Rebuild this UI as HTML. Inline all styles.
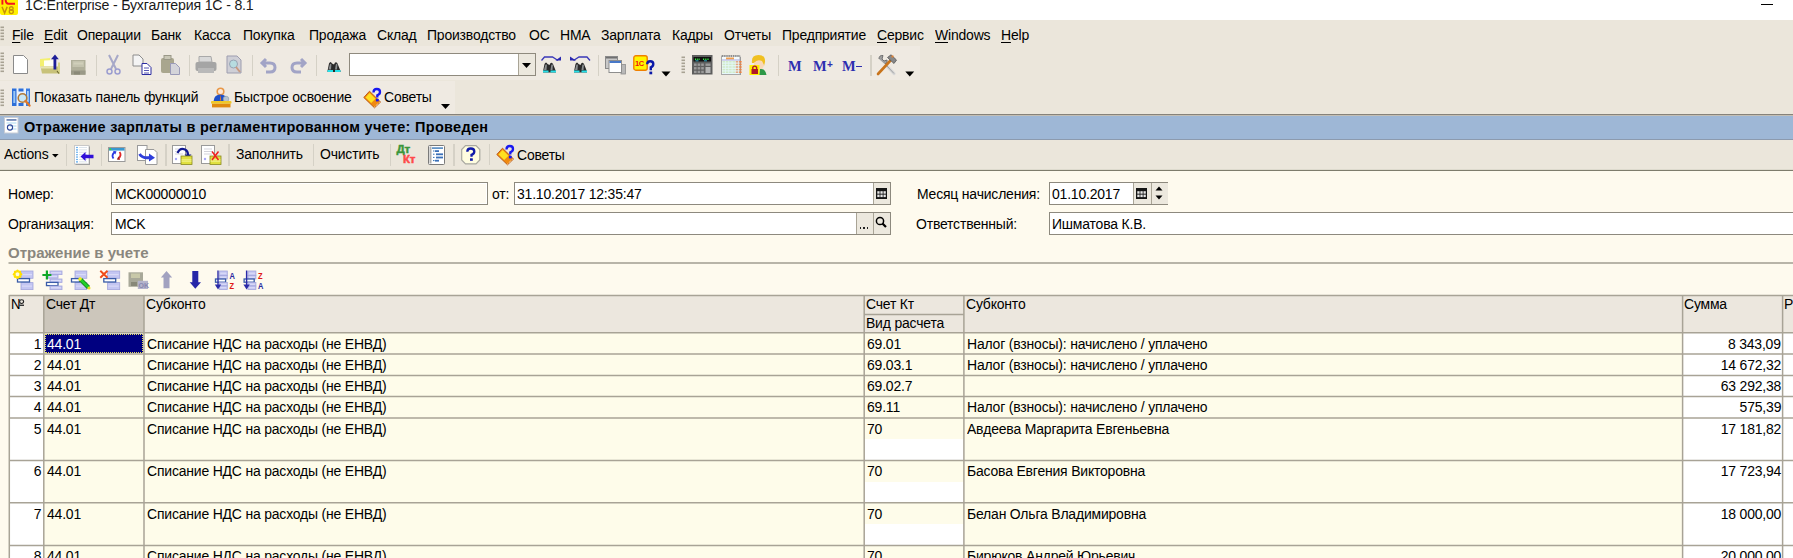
<!DOCTYPE html>
<html><head><meta charset="utf-8"><title>1C</title>
<style>
html,body{margin:0;padding:0;}
body{width:1793px;height:558px;position:relative;overflow:hidden;background:#FEFAEE;font-family:"Liberation Sans", sans-serif;}
.t{position:absolute;white-space:nowrap;line-height:1;font-family:"Liberation Sans", sans-serif;}
u{text-decoration:underline;text-underline-offset:2px;}
svg{overflow:visible}
</style></head><body>
<div style="position:absolute;left:0px;top:0px;width:1793px;height:20px;background:#fff"></div><div style="position:absolute;left:0px;top:0px;width:18px;height:15px;background:#FFF000;border-radius:0 0 2px 2px"></div><svg style="position:absolute;left:0px;top:0px" width="18" height="15" viewBox="0 0 18 15"><path d="M2.4 0 V4.6" stroke="#F5141E" stroke-width="1.9"/><path d="M5.6 0 Q5.8 3.8 8.5 3.8 H15" stroke="#F5141E" stroke-width="1.9" fill="none"/><path d="M2 6.8 L4.6 13 L7.2 6.8" stroke="#C8900A" stroke-width="1.5" fill="none"/><circle cx="11.3" cy="8.5" r="1.8" fill="none" stroke="#C8900A" stroke-width="1.4"/><circle cx="11.3" cy="11.6" r="2" fill="none" stroke="#C8900A" stroke-width="1.4"/></svg><div class="t" style="left:24.6px;top:-2.52px;font-size:15.5px;font-weight:normal;color:#1a1a1a;letter-spacing:-0.2px;transform:scaleX(0.913);transform-origin:left top;">1C:Enterprise - Бухгалтерия 1С - 8.1</div><div style="position:absolute;left:1761px;top:3.6px;width:12px;height:1.8px;background:#000"></div><div style="position:absolute;left:0px;top:20px;width:1793px;height:95px;background:#EBE6DB"></div><div style="position:absolute;left:0px;top:46px;width:920px;height:34px;background:#EFEAE2"></div><div style="position:absolute;left:0px;top:81px;width:455px;height:33px;background:#EFEAE2"></div><svg style="position:absolute;left:0px;top:26px" width="3" height="16" viewBox="0 0 3 16"><rect x="0.5" y="0.5" width="3.5" height="1.6" fill="#A8A293"/><rect x="0.5" y="3.5" width="3.5" height="1.6" fill="#A8A293"/><rect x="0.5" y="6.5" width="3.5" height="1.6" fill="#A8A293"/><rect x="0.5" y="9.5" width="3.5" height="1.6" fill="#A8A293"/><rect x="0.5" y="12.5" width="3.5" height="1.6" fill="#A8A293"/></svg><svg style="position:absolute;left:0px;top:52px" width="3" height="21" viewBox="0 0 3 21"><rect x="0.5" y="0.5" width="3.5" height="1.6" fill="#A8A293"/><rect x="0.5" y="3.5" width="3.5" height="1.6" fill="#A8A293"/><rect x="0.5" y="6.5" width="3.5" height="1.6" fill="#A8A293"/><rect x="0.5" y="9.5" width="3.5" height="1.6" fill="#A8A293"/><rect x="0.5" y="12.5" width="3.5" height="1.6" fill="#A8A293"/><rect x="0.5" y="15.5" width="3.5" height="1.6" fill="#A8A293"/><rect x="0.5" y="18.5" width="3.5" height="1.6" fill="#A8A293"/></svg><svg style="position:absolute;left:0px;top:89px" width="3" height="19" viewBox="0 0 3 19"><rect x="0.5" y="0.5" width="3.5" height="1.6" fill="#A8A293"/><rect x="0.5" y="3.5" width="3.5" height="1.6" fill="#A8A293"/><rect x="0.5" y="6.5" width="3.5" height="1.6" fill="#A8A293"/><rect x="0.5" y="9.5" width="3.5" height="1.6" fill="#A8A293"/><rect x="0.5" y="12.5" width="3.5" height="1.6" fill="#A8A293"/><rect x="0.5" y="15.5" width="3.5" height="1.6" fill="#A8A293"/></svg><svg style="position:absolute;left:681px;top:56px" width="3" height="17" viewBox="0 0 3 17"><rect x="0.5" y="0.5" width="3.5" height="1.6" fill="#A8A293"/><rect x="0.5" y="3.5" width="3.5" height="1.6" fill="#A8A293"/><rect x="0.5" y="6.5" width="3.5" height="1.6" fill="#A8A293"/><rect x="0.5" y="9.5" width="3.5" height="1.6" fill="#A8A293"/><rect x="0.5" y="12.5" width="3.5" height="1.6" fill="#A8A293"/><rect x="0.5" y="15.5" width="3.5" height="1.6" fill="#A8A293"/></svg><div class="t" style="left:12px;top:26.88px;font-size:15.5px;font-weight:normal;color:#000;letter-spacing:-0.2px;transform:scaleX(0.9);transform-origin:left top;"><u>F</u>ile</div><div class="t" style="left:43.8px;top:26.88px;font-size:15.5px;font-weight:normal;color:#000;letter-spacing:-0.2px;transform:scaleX(0.9);transform-origin:left top;"><u>E</u>dit</div><div class="t" style="left:76.6px;top:26.88px;font-size:15.5px;font-weight:normal;color:#000;letter-spacing:-0.2px;transform:scaleX(0.9);transform-origin:left top;">Операции</div><div class="t" style="left:151.4px;top:26.88px;font-size:15.5px;font-weight:normal;color:#000;letter-spacing:-0.2px;transform:scaleX(0.9);transform-origin:left top;">Банк</div><div class="t" style="left:194px;top:26.88px;font-size:15.5px;font-weight:normal;color:#000;letter-spacing:-0.2px;transform:scaleX(0.9);transform-origin:left top;">Касса</div><div class="t" style="left:243.4px;top:26.88px;font-size:15.5px;font-weight:normal;color:#000;letter-spacing:-0.2px;transform:scaleX(0.9);transform-origin:left top;">Покупка</div><div class="t" style="left:308.7px;top:26.88px;font-size:15.5px;font-weight:normal;color:#000;letter-spacing:-0.2px;transform:scaleX(0.9);transform-origin:left top;">Продажа</div><div class="t" style="left:376.7px;top:26.88px;font-size:15.5px;font-weight:normal;color:#000;letter-spacing:-0.2px;transform:scaleX(0.9);transform-origin:left top;">Склад</div><div class="t" style="left:427.2px;top:26.88px;font-size:15.5px;font-weight:normal;color:#000;letter-spacing:-0.2px;transform:scaleX(0.9);transform-origin:left top;">Производство</div><div class="t" style="left:529.3px;top:26.88px;font-size:15.5px;font-weight:normal;color:#000;letter-spacing:-0.2px;transform:scaleX(0.9);transform-origin:left top;">ОС</div><div class="t" style="left:560.2px;top:26.88px;font-size:15.5px;font-weight:normal;color:#000;letter-spacing:-0.2px;transform:scaleX(0.9);transform-origin:left top;">НМА</div><div class="t" style="left:600.9px;top:26.88px;font-size:15.5px;font-weight:normal;color:#000;letter-spacing:-0.2px;transform:scaleX(0.9);transform-origin:left top;">Зарплата</div><div class="t" style="left:672.4px;top:26.88px;font-size:15.5px;font-weight:normal;color:#000;letter-spacing:-0.2px;transform:scaleX(0.9);transform-origin:left top;">Кадры</div><div class="t" style="left:724.2px;top:26.88px;font-size:15.5px;font-weight:normal;color:#000;letter-spacing:-0.2px;transform:scaleX(0.9);transform-origin:left top;">Отчеты</div><div class="t" style="left:782.4px;top:26.88px;font-size:15.5px;font-weight:normal;color:#000;letter-spacing:-0.2px;transform:scaleX(0.9);transform-origin:left top;">Предприятие</div><div class="t" style="left:876.8px;top:26.88px;font-size:15.5px;font-weight:normal;color:#000;letter-spacing:-0.2px;transform:scaleX(0.9);transform-origin:left top;"><u>С</u>ервис</div><div class="t" style="left:935.3px;top:26.88px;font-size:15.5px;font-weight:normal;color:#000;letter-spacing:-0.2px;transform:scaleX(0.9);transform-origin:left top;"><u>W</u>indows</div><div class="t" style="left:1001.1px;top:26.88px;font-size:15.5px;font-weight:normal;color:#000;letter-spacing:-0.2px;transform:scaleX(0.9);transform-origin:left top;"><u>H</u>elp</div><svg style="position:absolute;left:13px;top:55px" width="16" height="20" viewBox="0 0 16 20"><path d="M0.5 0.5 H10.5 L14.5 4.5 V18.5 H0.5 Z" fill="#fff" stroke="#8A8A8A"/></svg><svg style="position:absolute;left:39px;top:53px" width="23" height="23" viewBox="0 0 23 23"><path d="M1 13.5 L1 6 L11 5 L11 13.5Z" fill="#F4F070"/><path d="M5 13.5 V7.5 L16 7 V13.5Z" fill="#FFFFF4"/><path d="M1.5 13.5 H20.5 V20.5 H3 Z" fill="#C8C27A"/><path d="M1.5 13.5 H17 V15.5 H2Z" fill="#E8E4B0"/><path d="M19 9.5 H21 V20.5 H19Z" fill="#D8D48A"/><path d="M20 20.5 L18 18" stroke="#6A6430" stroke-width="1.2"/><path d="M16 1.5 L12 6.3 H14.5 V16.5 H17.3 V6.3 H19.8Z" fill="#1E1E98"/></svg><svg style="position:absolute;left:71px;top:60px" width="15" height="15" viewBox="0 0 15 15"><rect x="0" y="0" width="14.5" height="14.7" fill="#B0AF9A"/><rect x="1.5" y="1" width="11.5" height="6" fill="#C4C3AE"/><rect x="2.5" y="2.5" width="9.5" height="2" fill="#D0CFBA"/><rect x="0" y="10.5" width="14.5" height="4.2" fill="#9A9988"/><rect x="3" y="11.5" width="6" height="3" fill="#8A8978"/></svg><div style="position:absolute;left:95.5px;top:55px;width:1.5px;height:21px;background:#D5D1C6"></div><svg style="position:absolute;left:106px;top:55px" width="15" height="20" viewBox="0 0 15 20"><path d="M3 0 L10 14 M12 0 L5 14" stroke="#A6A8C8" stroke-width="2"/><circle cx="3.5" cy="16.5" r="2.5" fill="none" stroke="#9B9DD0" stroke-width="1.5"/><circle cx="11.5" cy="16.5" r="2.5" fill="none" stroke="#9B9DD0" stroke-width="1.5"/></svg><svg style="position:absolute;left:132px;top:54px" width="21" height="22" viewBox="0 0 21 22"><path d="M1.0 1.0 H7.0 L11.0 5.0 V12.0 H1.0 Z" fill="#F4F4F4" stroke="#8C8C8C"/><path d="M10.0 9.5 H15.0 L19.0 13.5 V20.5 H10.0 Z" fill="#fff" stroke="#2B2BA0"/><path d="M12 14h5M12 16.5h5M12 19h5" stroke="#2B2BA0" stroke-width=".8"/></svg><svg style="position:absolute;left:160px;top:55px" width="22" height="21" viewBox="0 0 22 21"><rect x="1" y="3" width="13" height="15" rx="2" fill="#A9A68E"/><rect x="4" y="0.5" width="7" height="4" fill="#C9C7B6" stroke="#9A9888"/><path d="M10.5 8.5 H15.5 L19.5 12.5 V19.5 H10.5 Z" fill="#D4D4DA" stroke="#9A9AB8"/></svg><div style="position:absolute;left:188.5px;top:55px;width:1.5px;height:21px;background:#D5D1C6"></div><svg style="position:absolute;left:195px;top:56px" width="22" height="18" viewBox="0 0 22 18"><path d="M4 0.5 H16 L17 6 H4 Z" fill="#D9D9D9" stroke="#A9A9A9"/><rect x="0.5" y="6" width="21" height="9" rx="2" fill="#A5A5A5"/><rect x="3" y="12" width="16" height="5" fill="#B9B9B9"/></svg><svg style="position:absolute;left:226px;top:55px" width="17" height="20" viewBox="0 0 17 20"><path d="M1.0 1.0 H11.0 L15.0 5.0 V18.0 H1.0 Z" fill="#CFCFD6" stroke="#9D9DAF"/><circle cx="7.5" cy="9" r="4" fill="#B7DCE0" stroke="#98A4B4"/><path d="M10 12 L14 17" stroke="#C89A80" stroke-width="2"/></svg><div style="position:absolute;left:251.5px;top:55px;width:1.5px;height:21px;background:#D5D1C6"></div><svg style="position:absolute;left:261px;top:56px" width="16" height="18" viewBox="0 0 16 18"><path d="M5 3 L1 7 L5 11 M1.5 7 H9 Q14 7 14 11.5 Q14 16 9 16 H5" fill="none" stroke="#A2A4C6" stroke-width="3"/></svg><svg style="position:absolute;left:290px;top:56px" width="16" height="18" viewBox="0 0 16 18"><path d="M11 3 L15 7 L11 11 M14.5 7 H7 Q2 7 2 11.5 Q2 16 7 16 H11" fill="none" stroke="#A2A4C6" stroke-width="3"/></svg><div style="position:absolute;left:315.5px;top:55px;width:1.5px;height:21px;background:#D5D1C6"></div><svg style="position:absolute;left:326px;top:60px" width="16" height="15" viewBox="0 0 16 15"><g transform="translate(1,0.5)"><path d="M0.5 10.5 L2 3 Q3.5 0 5 3 L7 4 Q8.5 0 10.5 3 L13.5 10.5 V11.5 H0.5Z" fill="#2A2A2A"/><path d="M1.5 9 L2.8 4 Q3.6 2.5 4.4 4 L4 9Z M8 9 L8.8 4 Q9.6 2.5 10.4 4 L10 9Z" fill="#8A8E90"/><rect x="0.5" y="9.5" width="5.5" height="2" fill="#28E0E8"/><rect x="8" y="9.5" width="5.5" height="2" fill="#28E0E8"/></g></svg><div style="position:absolute;left:349px;top:53px;width:187px;height:23px;background:#fff;border:1px solid #8F8A7E;box-sizing:border-box"></div><div style="position:absolute;left:517.5px;top:54px;width:17.5px;height:21px;background:#ECE8DE;border-left:1px solid #A9A496;box-sizing:border-box"></div><svg style="position:absolute;left:521px;top:62px" width="12" height="7" viewBox="0 0 12 7"><path d="M1 1 H10 L5.5 6Z" fill="#000"/></svg><svg style="position:absolute;left:540px;top:54px" width="24" height="22" viewBox="0 0 24 22"><path d="M1.5 6.5 L4.5 3 H12.5 L18 6.5" fill="none" stroke="#3A38B8" stroke-width="1.3"/><path d="M15.5 6.5 H21 V2.5Z" fill="#2A28B0"/><g transform="translate(2.5,7)"><path d="M0.5 10.5 L2 3 Q3.5 0 5 3 L7 4 Q8.5 0 10.5 3 L13.5 10.5 V11.5 H0.5Z" fill="#2A2A2A"/><path d="M1.5 9 L2.8 4 Q3.6 2.5 4.4 4 L4 9Z M8 9 L8.8 4 Q9.6 2.5 10.4 4 L10 9Z" fill="#8A8E90"/><rect x="0.5" y="9.5" width="5.5" height="2" fill="#28E0E8"/><rect x="8" y="9.5" width="5.5" height="2" fill="#28E0E8"/></g></svg><svg style="position:absolute;left:569px;top:54px" width="24" height="22" viewBox="0 0 24 22"><path d="M21 6.5 L18 3 H10 L4.5 6.5" fill="none" stroke="#3A38B8" stroke-width="1.3"/><path d="M7 6.5 H1 V2.5Z" fill="#2A28B0"/><g transform="translate(4.5,7)"><path d="M0.5 10.5 L2 3 Q3.5 0 5 3 L7 4 Q8.5 0 10.5 3 L13.5 10.5 V11.5 H0.5Z" fill="#2A2A2A"/><path d="M1.5 9 L2.8 4 Q3.6 2.5 4.4 4 L4 9Z M8 9 L8.8 4 Q9.6 2.5 10.4 4 L10 9Z" fill="#8A8E90"/><rect x="0.5" y="9.5" width="5.5" height="2" fill="#28E0E8"/><rect x="8" y="9.5" width="5.5" height="2" fill="#28E0E8"/></g></svg><div style="position:absolute;left:597.5px;top:55px;width:1.5px;height:21px;background:#D5D1C6"></div><svg style="position:absolute;left:604.5px;top:55.5px" width="21" height="19" viewBox="0 0 21 19"><rect x="0.5" y="0.5" width="12" height="12" fill="#C8C8C8" stroke="#8A8A8A"/><rect x="1" y="1" width="11" height="1.5" fill="#707070"/><rect x="16" y="8.5" width="4.5" height="9.5" fill="#B8B8B8" stroke="#8E8E8E" stroke-width=".8"/><rect x="4" y="4.5" width="12.5" height="12" fill="#fff" stroke="#8E8E8E"/><rect x="4.5" y="5" width="11.5" height="2" fill="#4878C8"/></svg><svg style="position:absolute;left:633px;top:54.5px" width="23" height="21" viewBox="0 0 23 21"><rect x="0.8" y="0.8" width="13.4" height="14.4" rx="2" fill="#FFF600" stroke="#F08000" stroke-width="1.4"/><text x="2" y="11" font-family="Liberation Sans" font-weight="bold" font-size="7.5" fill="#F01010" letter-spacing="-.5">1C</text><path d="M14.2 9.3 Q14.2 6.2 17.2 6.2 Q20.3 6.2 20.3 9 Q20.3 11.3 17.8 12.3 V15.2" fill="none" stroke="#0A18A8" stroke-width="2.4"/><rect x="16.4" y="16.6" width="2.8" height="2.7" fill="#0A18A8"/></svg><svg style="position:absolute;left:660.5px;top:71px" width="10" height="6" viewBox="0 0 10 6"><path d="M0.5 0.5 H9.5 L5 5.5Z" fill="#000"/></svg><svg style="position:absolute;left:692px;top:55px" width="20.5" height="19.5" viewBox="0 0 20.5 19.5"><rect x="0" y="0" width="20.5" height="19.5" fill="#5E5E5E"/><rect x="1.5" y="2" width="17.5" height="4.5" fill="#111"/><path d="M3 4.3h5M11 4.3h6" stroke="#30F040" stroke-width="1.6" stroke-dasharray="1 .8"/><path d="M3.5 5.8h3M12 5.8h3" stroke="#30C8E8" stroke-width=".8"/><rect x="2.0" y="8.5" width="2.6" height="2.4" fill="#9A9A9A"/><rect x="5.6" y="8.5" width="2.6" height="2.4" fill="#9A9A9A"/><rect x="9.2" y="8.5" width="2.6" height="2.4" fill="#9A9A9A"/><rect x="2.0" y="12.1" width="2.6" height="2.4" fill="#9A9A9A"/><rect x="5.6" y="12.1" width="2.6" height="2.4" fill="#9A9A9A"/><rect x="9.2" y="12.1" width="2.6" height="2.4" fill="#9A9A9A"/><rect x="2.0" y="15.7" width="2.6" height="2.4" fill="#9A9A9A"/><rect x="5.6" y="15.7" width="2.6" height="2.4" fill="#9A9A9A"/><rect x="9.2" y="15.7" width="2.6" height="2.4" fill="#9A9A9A"/><rect x="13.5" y="8.5" width="5" height="2.4" fill="#9A9A9A"/><rect x="13.5" y="12" width="5" height="6" fill="#B4B4B4"/></svg><svg style="position:absolute;left:721px;top:55px" width="20" height="20" viewBox="0 0 20 20"><rect x="0.5" y="1" width="18.5" height="18.5" fill="#F4FBFC" stroke="#A8A8A8"/><rect x="19" y="2" width="1" height="18" fill="#9A9A9A"/><path d="M1 1h18" stroke="#505050" stroke-width="1.2" stroke-dasharray="1.2 1"/><rect x="5" y="2.5" width="8" height="2" fill="#F0A050"/><rect x="1" y="4.5" width="18" height="1" fill="#A8A8E0"/><rect x="1.5" y="6.0" width="2.6" height="1.6" fill="#D8E8B0"/><rect x="4.8" y="6.0" width="2.6" height="1.6" fill="#D8E8B0"/><rect x="8.1" y="6.0" width="2.6" height="1.6" fill="#D8E8B0"/><rect x="11.399999999999999" y="6.0" width="2.6" height="1.6" fill="#D8E8B0"/><rect x="14.7" y="6.0" width="2.6" height="1.6" fill="#F08040"/><rect x="18.0" y="6.0" width="2.6" height="1.6" fill="#F08040"/><rect x="1.5" y="8.6" width="2.6" height="1.6" fill="#D8E8B0"/><rect x="4.8" y="8.6" width="2.6" height="1.6" fill="#D8E8B0"/><rect x="8.1" y="8.6" width="2.6" height="1.6" fill="#D8E8B0"/><rect x="11.399999999999999" y="8.6" width="2.6" height="1.6" fill="#D8E8B0"/><rect x="14.7" y="8.6" width="2.6" height="1.6" fill="#F08040"/><rect x="18.0" y="8.6" width="2.6" height="1.6" fill="#F08040"/><rect x="1.5" y="11.2" width="2.6" height="1.6" fill="#D8E8B0"/><rect x="4.8" y="11.2" width="2.6" height="1.6" fill="#D8E8B0"/><rect x="8.1" y="11.2" width="2.6" height="1.6" fill="#D8E8B0"/><rect x="11.399999999999999" y="11.2" width="2.6" height="1.6" fill="#D8E8B0"/><rect x="14.7" y="11.2" width="2.6" height="1.6" fill="#F08040"/><rect x="18.0" y="11.2" width="2.6" height="1.6" fill="#F08040"/><rect x="1.5" y="13.8" width="2.6" height="1.6" fill="#D8E8B0"/><rect x="4.8" y="13.8" width="2.6" height="1.6" fill="#D8E8B0"/><rect x="8.1" y="13.8" width="2.6" height="1.6" fill="#D8E8B0"/><rect x="11.399999999999999" y="13.8" width="2.6" height="1.6" fill="#D8E8B0"/><rect x="14.7" y="13.8" width="2.6" height="1.6" fill="#F08040"/><rect x="18.0" y="13.8" width="2.6" height="1.6" fill="#F08040"/><rect x="1.5" y="16.4" width="2.6" height="1.6" fill="#D8E8B0"/><rect x="4.8" y="16.4" width="2.6" height="1.6" fill="#D8E8B0"/><rect x="8.1" y="16.4" width="2.6" height="1.6" fill="#D8E8B0"/><rect x="11.399999999999999" y="16.4" width="2.6" height="1.6" fill="#D8E8B0"/><rect x="14.7" y="16.4" width="2.6" height="1.6" fill="#F08040"/><rect x="18.0" y="16.4" width="2.6" height="1.6" fill="#F08040"/><rect x="1.5" y="6" width="17" height="13" fill="#C8F0F8" opacity=".35"/></svg><svg style="position:absolute;left:749px;top:54px" width="19" height="22" viewBox="0 0 19 22"><path d="M3 9 Q2 1 9.5 1 Q16.5 1 16 8 L15 12 Q11 5 5 9Z" fill="#F0C020"/><path d="M5 9 Q8 5 13 7 L15 11 Q14 16 10 16 Q6 16 5 12Z" fill="#F8D8B8"/><path d="M11 15 Q16 14 17.5 21 H10Z" fill="#2E9848"/><rect x="0.5" y="11" width="10" height="10" fill="#FFF000"/><rect x="2.5" y="15" width="6.5" height="5" fill="#B01828"/><path d="M3.8 15 V13.3 Q5.7 11 7.6 13.3 V15" fill="none" stroke="#B01828" stroke-width="1.4"/></svg><div style="position:absolute;left:777.5px;top:55px;width:1.5px;height:21px;background:#D5D1C6"></div><div class="t" style="left:788px;top:58.73px;font-size:14.5px;font-weight:bold;color:#2E2EB0;letter-spacing:-0.2px;font-family:Liberation Serif,serif;">M</div><div class="t" style="left:813px;top:58.73px;font-size:14.5px;font-weight:bold;color:#2E2EB0;letter-spacing:-0.2px;font-family:Liberation Serif,serif;">M</div><div class="t" style="left:827px;top:60.03px;font-size:10px;font-weight:bold;color:#2E2EB0;letter-spacing:-0.2px;font-family:Liberation Sans,sans-serif;">+</div><div class="t" style="left:842px;top:58.73px;font-size:14.5px;font-weight:bold;color:#2E2EB0;letter-spacing:-0.2px;font-family:Liberation Serif,serif;">M</div><div style="position:absolute;left:855.5px;top:65.5px;width:6.5px;height:1.6px;background:#2E2EB0"></div><div style="position:absolute;left:870.0px;top:55px;width:1.5px;height:21px;background:#D5D1C6"></div><svg style="position:absolute;left:876px;top:54px" width="22" height="22" viewBox="0 0 22 22"><path d="M3 5 Q3 1 7 1.5 L6 5 L8 7 L11 6 Q12 9 9 10 L12 13" fill="#A0A0A0" stroke="#707070" stroke-width="1"/><path d="M10.5 11.5 L18 19.5" stroke="#D8D8D8" stroke-width="3.2" stroke-linecap="round"/><path d="M10.5 11.5 L18 19.5" stroke="#909090" stroke-width=".8"/><path d="M2 20 L14.5 6.5" stroke="#C8741C" stroke-width="2.6" stroke-linecap="round"/><path d="M11.5 3.5 L15 0.8 L20.5 6 L18 9.5 Z" fill="#888" stroke="#555" stroke-width=".8"/><rect x="15.5" y="1.5" width="2" height="2" fill="#E08030"/></svg><svg style="position:absolute;left:905px;top:71px" width="9.5" height="6" viewBox="0 0 9.5 6"><path d="M0.3 0.5 H9.2 L4.75 5.5Z" fill="#000"/></svg><svg style="position:absolute;left:12px;top:88px" width="20" height="20" viewBox="0 0 20 20"><rect x="0" y="0.5" width="18" height="17.5" fill="#EAF2FC"/><rect x="0" y="0.5" width="4.5" height="17.5" fill="#2D6FD8"/><rect x="1.3" y="3" width="2" height="12" fill="#9CC8F4"/><rect x="6.5" y="0.5" width="5" height="3" fill="#2D6FD8"/><rect x="6.5" y="15" width="5" height="3" fill="#2D6FD8"/><rect x="14" y="0.5" width="4" height="17.5" fill="#3A7CE0"/><rect x="15" y="3" width="1.8" height="11" fill="#A8D0F8"/><circle cx="10.5" cy="10" r="4.3" fill="#C8E8F8" stroke="#B07A38" stroke-width="1.6"/><path d="M13.5 13 L17.5 17.5" stroke="#E07828" stroke-width="2.4" stroke-linecap="round"/></svg><div class="t" style="left:34px;top:88.88px;font-size:15.5px;font-weight:normal;color:#000;letter-spacing:-0.2px;transform:scaleX(0.9);transform-origin:left top;">Показать панель функций</div><svg style="position:absolute;left:211px;top:86px" width="21" height="22" viewBox="0 0 21 22"><circle cx="9.5" cy="5.5" r="3.3" fill="#FCE8D8" stroke="#E89848" stroke-width="1.6"/><path d="M2.5 15.5 Q3 8.5 9.5 8.5 Q16 8.5 16.5 15.5Z" fill="#1E4FC8"/><path d="M9.5 8.5 L8.8 14.5 L10.2 14.5Z" fill="#F07818"/><circle cx="15" cy="13" r="2.8" fill="#B8C4D0" stroke="#8898A8" stroke-width=".6"/><rect x="0" y="15" width="20.5" height="2.8" rx="1" fill="#F0C828"/><rect x="1" y="17.8" width="18.5" height="3.6" fill="#E08A10"/></svg><div class="t" style="left:233.5px;top:88.88px;font-size:15.5px;font-weight:normal;color:#000;letter-spacing:-0.2px;transform:scaleX(0.9);transform-origin:left top;">Быстрое освоение</div><svg style="position:absolute;left:363px;top:87px" width="20" height="22" viewBox="0 0 20 22"><path d="M0.8 10.5 L6.5 4.2 L17.5 15 L11.5 20.8Z" fill="#F08A10" stroke="#B85008" stroke-width=".9"/><path d="M2.5 10.5 L6.6 6 L12.5 11.8 L8.2 16Z" fill="#FFE020"/><path d="M11.5 20 L17 14.8" stroke="#FFF4E0" stroke-width="1" stroke-dasharray="1 1"/><path d="M10.5 5.5 Q10.5 2 13.8 2 Q17 2 17 5 Q17 7.3 14.3 8.3 V10.5" fill="none" stroke="#1818F0" stroke-width="2.3"/><rect x="12.9" y="11.8" width="2.8" height="2.6" fill="#1818F0"/></svg><div class="t" style="left:384px;top:88.88px;font-size:15.5px;font-weight:normal;color:#000;letter-spacing:-0.2px;transform:scaleX(0.9);transform-origin:left top;">Советы</div><svg style="position:absolute;left:440px;top:102.8px" width="11" height="7" viewBox="0 0 11 7"><path d="M1 1 H10 L5.5 6Z" fill="#000"/></svg><svg style="position:absolute;left:0;top:0" width="1793" height="180"><line x1="0" y1="114.7" x2="1793" y2="114.7" stroke="#86827A" stroke-width="1.6"/></svg><div style="position:absolute;left:0px;top:115.5px;width:1793px;height:23.5px;background:#9EB7D6"></div><div style="position:absolute;left:0px;top:138.6px;width:1793px;height:1.2px;background:#8C9AAE"></div><svg style="position:absolute;left:3.5px;top:117px" width="15" height="17" viewBox="0 0 15 17"><rect x="0.5" y="0.5" width="13.5" height="15.5" fill="#fff" stroke="#C8CCD4"/><rect x="2.5" y="2.3" width="10" height="1.3" fill="#3A5A9A"/><path d="M2.5 6h10M6 9h6.5M7 12h5.5" stroke="#A8D8F0" stroke-width="1"/><circle cx="6" cy="10.5" r="2.6" fill="none" stroke="#30489A" stroke-width="1.1"/></svg><div class="t" style="left:24px;top:119.93px;font-size:14.5px;font-weight:bold;color:#000;letter-spacing:0.3px;">Отражение зарплаты в регламентированном учете: Проведен</div><div style="position:absolute;left:0px;top:140px;width:1793px;height:29px;background:#EBE6DB"></div><svg style="position:absolute;left:0;top:160" width="1793" height="20"><line x1="0" y1="10.4" x2="1793" y2="10.4" stroke="#7E7C6C" stroke-width="1.4"/></svg><div class="t" style="left:3.5px;top:146.38px;font-size:15.5px;font-weight:normal;color:#000;letter-spacing:-0.2px;transform:scaleX(0.9);transform-origin:left top;">Actions</div><svg style="position:absolute;left:52px;top:154.3px" width="7" height="4" viewBox="0 0 7 4"><path d="M0 0 H6.6 L3.3 3.5Z" fill="#000"/></svg><div style="position:absolute;left:65.8px;top:144px;width:1.5px;height:22px;background:#D5D1C6"></div><svg style="position:absolute;left:74px;top:145px" width="20" height="20" viewBox="0 0 20 20"><rect x="0.5" y="0.5" width="14.5" height="18.5" fill="#fff" stroke="#C8C8C8"/><rect x="15" y="1.5" width="1" height="18" fill="#A0A0A0"/><rect x="1.5" y="19" width="14.5" height="1" fill="#A0A0A0"/><circle cx="3" cy="2.5" r=".8" fill="#3A98E8"/><rect x="5" y="2.0" width="8" height=".9" fill="#D8E0E8"/><circle cx="3" cy="4.9" r=".8" fill="#3A98E8"/><rect x="5" y="4.4" width="8" height=".9" fill="#D8E0E8"/><circle cx="3" cy="7.3" r=".8" fill="#3A98E8"/><rect x="5" y="6.8" width="8" height=".9" fill="#D8E0E8"/><circle cx="3" cy="9.7" r=".8" fill="#3A98E8"/><rect x="5" y="9.2" width="8" height=".9" fill="#D8E0E8"/><circle cx="3" cy="12.1" r=".8" fill="#3A98E8"/><rect x="5" y="11.6" width="8" height=".9" fill="#D8E0E8"/><circle cx="3" cy="14.5" r=".8" fill="#3A98E8"/><rect x="5" y="14.0" width="8" height=".9" fill="#D8E0E8"/><circle cx="3" cy="16.9" r=".8" fill="#3A98E8"/><rect x="5" y="16.4" width="8" height=".9" fill="#D8E0E8"/><path d="M6.5 11.5 L11.5 7 V9.8 H19.5 V13.3 H11.5 V16Z" fill="#3010D8"/></svg><div style="position:absolute;left:100.5px;top:144px;width:1.5px;height:22px;background:#D5D1C6"></div><svg style="position:absolute;left:108px;top:147px" width="18" height="15" viewBox="0 0 18 15"><rect x="0.5" y="0.5" width="16.5" height="14" fill="#fff" stroke="#9A9A9A"/><rect x="1" y="1" width="15.5" height="2.6" fill="#3898D0"/><rect x="1.5" y="1.5" width="1.6" height="1.6" fill="#30E030"/><path d="M5.5 11.5 Q3 8 6.8 5" fill="none" stroke="#2838E0" stroke-width="1.8"/><path d="M5 4 L8.5 4.2 L7.3 7.5Z" fill="#2838E0"/><path d="M11.5 5 Q14 8 10.5 11.5" fill="none" stroke="#E02828" stroke-width="1.8"/><path d="M12 13 L8.8 12.5 L10.5 9.5Z" fill="#A01818"/></svg><svg style="position:absolute;left:137px;top:145px" width="21" height="20" viewBox="0 0 21 20"><rect x="0.5" y="0.5" width="9.5" height="15" fill="#fff" stroke="#9A9A9A"/><path d="M8.5 4.5 H17 L20 7.5 V19.5 H8.5Z" fill="#fff" stroke="#9A9A9A"/><path d="M2.5 9 Q6 14 13 12.5" fill="none" stroke="#2E3EDA" stroke-width="3"/><path d="M12 8.5 L18 12.8 L12 16.5Z" fill="#2E3EDA"/></svg><div style="position:absolute;left:165.1px;top:144px;width:1.5px;height:22px;background:#D5D1C6"></div><svg style="position:absolute;left:172px;top:145px" width="22" height="20" viewBox="0 0 22 20"><rect x="0.5" y="0.5" width="13" height="18" fill="#fff" stroke="#9A9A9A"/><path d="M3 4h8M3 6.5h4M3 9h8" stroke="#C8C8D0" stroke-width=".8"/><circle cx="4" cy="14" r="1.2" fill="#A8A8F8"/><path d="M5.5 8 Q8 2.5 13 4.5 Q16 6 16 10" fill="none" stroke="#101890" stroke-width="2.2"/><path d="M12.5 9.5 H19.5 L16 13Z" fill="#101890"/><rect x="9" y="11" width="11" height="8.5" fill="#E0E040" stroke="#888820" stroke-width=".8"/><path d="M9.5 14.8h10M9.5 16.2h10" stroke="#F8F8A0" stroke-width=".8"/></svg><svg style="position:absolute;left:201px;top:145px" width="22" height="20" viewBox="0 0 22 20"><rect x="0.5" y="0.5" width="13" height="18" fill="#fff" stroke="#9A9A9A"/><path d="M3 4h8M3 6.5h8M3 9h8" stroke="#C8C8D0" stroke-width=".8"/><circle cx="4" cy="14" r="1.2" fill="#A8A8F8"/><rect x="9" y="11" width="11" height="8.5" fill="#E0E040" stroke="#888820" stroke-width=".8"/><path d="M9.5 14.8h10M9.5 16.2h10" stroke="#F8F8A0" stroke-width=".8"/><path d="M11 6.5 L17.5 15 M17.5 6.5 L11 15" stroke="#F02020" stroke-width="1.5"/></svg><div style="position:absolute;left:228.1px;top:144px;width:1.5px;height:22px;background:#D5D1C6"></div><div class="t" style="left:236px;top:146.38px;font-size:15.5px;font-weight:normal;color:#000;letter-spacing:-0.2px;transform:scaleX(0.9);transform-origin:left top;">Заполнить</div><div style="position:absolute;left:312.5px;top:144px;width:1.5px;height:22px;background:#D5D1C6"></div><div class="t" style="left:320px;top:146.38px;font-size:15.5px;font-weight:normal;color:#000;letter-spacing:-0.2px;transform:scaleX(0.9);transform-origin:left top;">Очистить</div><div style="position:absolute;left:389.9px;top:144px;width:1.5px;height:22px;background:#D5D1C6"></div><div class="t" style="left:396.5px;top:144.47px;font-size:11.5px;font-weight:bold;color:#3A963A;letter-spacing:-0.2px;-webkit-text-stroke:0.5px #3A963A;">Дт</div><div class="t" style="left:403px;top:153.97px;font-size:11.5px;font-weight:bold;color:#FF4A4A;letter-spacing:-0.2px;-webkit-text-stroke:0.5px #FF4A4A;">Кт</div><svg style="position:absolute;left:428px;top:145px" width="17" height="20" viewBox="0 0 17 20"><rect x="0.5" y="0.5" width="16" height="19" rx="1" fill="#fff" stroke="#7A7A7A"/><rect x="1.5" y="1.5" width="2" height="17" fill="#B0B0B0"/><rect x="4" y="2.3" width="11" height="1.6" fill="#5088C0"/><rect x="5" y="5.5" width="1.5" height="1" fill="#3070B0"/><rect x="7" y="5.2" width="4" height="1.8" fill="#3A70B8"/><rect x="5" y="8.7" width="1.5" height="1" fill="#3070B0"/><rect x="8" y="8.4" width="7" height="1.8" fill="#3A70B8"/><rect x="5" y="11.9" width="1.5" height="1" fill="#3070B0"/><rect x="8" y="11.600000000000001" width="7" height="1.8" fill="#3A70B8"/><rect x="5" y="15.100000000000001" width="1.5" height="1" fill="#3070B0"/><rect x="7" y="14.8" width="4" height="1.8" fill="#3A70B8"/></svg><div style="position:absolute;left:453.0px;top:144px;width:1.5px;height:22px;background:#D5D1C6"></div><svg style="position:absolute;left:461px;top:145px" width="19.5" height="19.5" viewBox="0 0 19.5 19.5"><path d="M4.5 0.7 H15 L18.8 4.5 V15 L15 18.8 H4.5 L0.7 15 V4.5Z" fill="#FFFDE0" stroke="#A8A8A0" stroke-width="1.2"/><path d="M6.3 6.8 Q6.3 3.5 9.8 3.5 Q13.3 3.5 13.3 6.5 Q13.3 8.8 10.5 9.8 V11.8" fill="none" stroke="#101AA8" stroke-width="2.3"/><rect x="9" y="13.3" width="2.8" height="2.5" fill="#101AA8"/></svg><div style="position:absolute;left:488.5px;top:144px;width:1.5px;height:21px;background:#D5D1C6"></div><svg style="position:absolute;left:496px;top:144px" width="20" height="22" viewBox="0 0 20 22"><path d="M0.8 10.5 L6.5 4.2 L17.5 15 L11.5 20.8Z" fill="#F08A10" stroke="#B85008" stroke-width=".9"/><path d="M2.5 10.5 L6.6 6 L12.5 11.8 L8.2 16Z" fill="#FFE020"/><path d="M11.5 20 L17 14.8" stroke="#FFF4E0" stroke-width="1" stroke-dasharray="1 1"/><path d="M10.5 5.5 Q10.5 2 13.8 2 Q17 2 17 5 Q17 7.3 14.3 8.3 V10.5" fill="none" stroke="#1818F0" stroke-width="2.3"/><rect x="12.9" y="11.8" width="2.8" height="2.6" fill="#1818F0"/></svg><div class="t" style="left:517px;top:146.88px;font-size:15.5px;font-weight:normal;color:#000;letter-spacing:-0.2px;transform:scaleX(0.9);transform-origin:left top;">Советы</div><div style="position:absolute;left:0px;top:171.1px;width:1793px;height:388px;background:#FEFAEE"></div><div class="t" style="left:8px;top:185.88px;font-size:15.5px;font-weight:normal;color:#000;letter-spacing:-0.2px;transform:scaleX(0.9);transform-origin:left top;">Номер:</div><div style="position:absolute;left:111px;top:181.5px;width:377px;height:23px;background:#FEFAF0;box-shadow:inset -1px -1px 0 #fff, inset 1px 1px 0 #fff;border:1px solid #8D897E;box-sizing:border-box"></div><div class="t" style="left:114.8px;top:185.88px;font-size:15.5px;font-weight:normal;color:#000;letter-spacing:-0.2px;transform:scaleX(0.9);transform-origin:left top;">MCK00000010</div><div class="t" style="left:492px;top:185.88px;font-size:15.5px;font-weight:normal;color:#000;letter-spacing:-0.2px;transform:scaleX(0.9);transform-origin:left top;">от:</div><div style="position:absolute;left:513.5px;top:181.5px;width:377.5px;height:23px;background:#fff;border:1px solid #8D897E;box-sizing:border-box"></div><div class="t" style="left:517.2px;top:185.88px;font-size:15.5px;font-weight:normal;color:#000;letter-spacing:-0.2px;transform:scaleX(0.9);transform-origin:left top;">31.10.2017 12:35:47</div><div style="position:absolute;left:872.5px;top:182.5px;width:17.5px;height:21px;background:#ECE8DE;border-left:1px solid #A9A496;box-sizing:border-box"></div><svg style="position:absolute;left:875.5px;top:187.5px" width="11" height="11" viewBox="0 0 11 11"><rect x="0" y="0" width="11" height="11" fill="#151515"/><rect x="1.3" y="3.2" width="2.3" height="2.5" fill="#E8E8E8"/><rect x="4.4" y="3.2" width="2.3" height="2.5" fill="#E8E8E8"/><rect x="7.5" y="3.2" width="2.3" height="2.5" fill="#E8E8E8"/><rect x="1.3" y="6.6" width="2.3" height="2.5" fill="#E8E8E8"/><rect x="4.4" y="6.6" width="2.3" height="2.5" fill="#E8E8E8"/><rect x="7.5" y="6.6" width="2.3" height="2.5" fill="#E8E8E8"/></svg><div class="t" style="left:916.9px;top:185.88px;font-size:15.5px;font-weight:normal;color:#000;letter-spacing:-0.2px;transform:scaleX(0.9);transform-origin:left top;">Месяц начисления:</div><div style="position:absolute;left:1049px;top:181.5px;width:119px;height:23px;background:#fff;border:1px solid #8D897E;box-sizing:border-box"></div><div class="t" style="left:1052.2px;top:185.88px;font-size:15.5px;font-weight:normal;color:#000;letter-spacing:-0.2px;transform:scaleX(0.9);transform-origin:left top;">01.10.2017</div><div style="position:absolute;left:1132.5px;top:182.5px;width:18px;height:21px;background:#ECE8DE;border-left:1px solid #A9A496;box-sizing:border-box"></div><svg style="position:absolute;left:1136px;top:187.5px" width="11" height="11" viewBox="0 0 11 11"><rect x="0" y="0" width="11" height="11" fill="#151515"/><rect x="1.3" y="3.2" width="2.3" height="2.5" fill="#E8E8E8"/><rect x="4.4" y="3.2" width="2.3" height="2.5" fill="#E8E8E8"/><rect x="7.5" y="3.2" width="2.3" height="2.5" fill="#E8E8E8"/><rect x="1.3" y="6.6" width="2.3" height="2.5" fill="#E8E8E8"/><rect x="4.4" y="6.6" width="2.3" height="2.5" fill="#E8E8E8"/><rect x="7.5" y="6.6" width="2.3" height="2.5" fill="#E8E8E8"/></svg><div style="position:absolute;left:1150.5px;top:182.5px;width:17px;height:21px;background:#ECE8DE;border-left:1px solid #A9A496;box-sizing:border-box"></div><svg style="position:absolute;left:1155px;top:186px" width="8" height="14" viewBox="0 0 8 14"><path d="M0.5 4.5 L4 0.5 L7.5 4.5Z M0.5 9.5 L4 13.5 L7.5 9.5Z" fill="#000"/></svg><div class="t" style="left:8px;top:215.88px;font-size:15.5px;font-weight:normal;color:#000;letter-spacing:-0.2px;transform:scaleX(0.9);transform-origin:left top;">Организация:</div><div style="position:absolute;left:111px;top:211.5px;width:780px;height:23px;background:#fff;border:1px solid #8D897E;box-sizing:border-box"></div><div class="t" style="left:114.8px;top:215.88px;font-size:15.5px;font-weight:normal;color:#000;letter-spacing:-0.2px;transform:scaleX(0.9);transform-origin:left top;">MCK</div><div style="position:absolute;left:855.5px;top:212.5px;width:17px;height:21px;background:#ECE8DE;border-left:1px solid #A9A496;box-sizing:border-box"></div><div style="position:absolute;left:859.5px;top:227.3px;width:1.6px;height:1.6px;background:#222"></div><div style="position:absolute;left:863.2px;top:227.3px;width:1.6px;height:1.6px;background:#222"></div><div style="position:absolute;left:866.9px;top:227.3px;width:1.6px;height:1.6px;background:#222"></div><div style="position:absolute;left:872.5px;top:212.5px;width:17.5px;height:21px;background:#ECE8DE;border-left:1px solid #A9A496;box-sizing:border-box"></div><svg style="position:absolute;left:875px;top:216px" width="12" height="13" viewBox="0 0 12 13"><circle cx="5" cy="5" r="3.6" fill="none" stroke="#000" stroke-width="1.5"/><path d="M7.5 7.5 L11 11" stroke="#000" stroke-width="2.2"/></svg><div class="t" style="left:916px;top:215.88px;font-size:15.5px;font-weight:normal;color:#000;letter-spacing:-0.2px;transform:scaleX(0.9);transform-origin:left top;">Ответственный:</div><div style="position:absolute;left:1049px;top:211.5px;width:760px;height:23px;background:#fff;border:1px solid #8D897E;box-sizing:border-box"></div><div class="t" style="left:1052.2px;top:215.88px;font-size:15.5px;font-weight:normal;color:#000;letter-spacing:-0.2px;transform:scaleX(0.9);transform-origin:left top;">Ишматова К.В.</div><div class="t" style="left:8px;top:245.18px;font-size:15.5px;font-weight:bold;color:#8A877E;letter-spacing:0px;transform:scaleX(0.97);transform-origin:left top;">Отражение в учете</div><svg style="position:absolute;left:0;top:250" width="1793" height="20"><line x1="8.5" y1="13" x2="1793" y2="13" stroke="#A09C90" stroke-width="1.5"/></svg><svg style="position:absolute;left:0;top:0" width="300" height="300"><rect x="21" y="271" width="12" height="7.300000000000011" fill="#C4C6F2" stroke="#A4A6DC" stroke-width=".8"/><line x1="22" y1="274.65" x2="32" y2="274.65" stroke="#E4E4FA" stroke-width=".8"/><rect x="21" y="282.6" width="12" height="7.0" fill="#C4C6F2" stroke="#A4A6DC" stroke-width=".8"/><line x1="22" y1="286.1" x2="32" y2="286.1" stroke="#E4E4FA" stroke-width=".8"/><rect x="17.5" y="278.6" width="12.0" height="3.3999999999999773" fill="#fff" stroke="#3A5CA8" stroke-width="1.3"/><g fill="#FFE000"><circle cx="20.7" cy="274.3" r="1.5"/><circle cx="19.76364246133504" cy="276.5618405795372" r="1.5"/><circle cx="17.502548245474348" cy="277.49999898538186" r="1.5"/><circle cx="15.239962736575983" cy="276.565442907675" r="1.5"/><circle cx="14.300004058471874" cy="274.30509648933275" r="1.5"/><circle cx="15.232758082584727" cy="272.0417674858609" r="1.5"/><circle cx="17.4923552700407" cy="271.1000091315593" r="1.5"/><circle cx="19.756426332826955" cy="272.0309605105849" r="1.5"/></g><circle cx="17.5" cy="274.3" r="1.6" fill="#FFFCE0"/><rect x="50" y="271" width="12" height="3.6000000000000227" fill="#C4C6F2" stroke="#A4A6DC" stroke-width=".8"/><line x1="51" y1="272.8" x2="61" y2="272.8" stroke="#E4E4FA" stroke-width=".8"/><rect x="48" y="274.6" width="10" height="3.599999999999966" fill="#C4C6F2" stroke="#A4A6DC" stroke-width=".8"/><line x1="49" y1="276.4" x2="57" y2="276.4" stroke="#E4E4FA" stroke-width=".8"/><rect x="50" y="279" width="12" height="3.3999999999999773" fill="#C4C6F2" stroke="#A4A6DC" stroke-width=".8"/><line x1="51" y1="280.7" x2="61" y2="280.7" stroke="#E4E4FA" stroke-width=".8"/><rect x="46.5" y="282.4" width="11.5" height="3.2000000000000455" fill="#fff" stroke="#3A5CA8" stroke-width="1.3"/><rect x="50" y="286" width="12" height="3.6000000000000227" fill="#C4C6F2" stroke="#A4A6DC" stroke-width=".8"/><line x1="51" y1="287.8" x2="61" y2="287.8" stroke="#E4E4FA" stroke-width=".8"/><path d="M46.9 270.5 V279.5 M42.4 275 H51.4" stroke="#10A828" stroke-width="2.2"/><rect x="75" y="271" width="11.799999999999997" height="7.300000000000011" fill="#C4C6F2" stroke="#A4A6DC" stroke-width=".8"/><line x1="76" y1="274.65" x2="85.8" y2="274.65" stroke="#E4E4FA" stroke-width=".8"/><rect x="75" y="282.6" width="11.799999999999997" height="7.0" fill="#C4C6F2" stroke="#A4A6DC" stroke-width=".8"/><line x1="76" y1="286.1" x2="85.8" y2="286.1" stroke="#E4E4FA" stroke-width=".8"/><rect x="71.5" y="278.6" width="8.0" height="3.3999999999999773" fill="#fff" stroke="#3A5CA8" stroke-width="1.3"/><path d="M80.5 279.5 L88.5 287.5" stroke="#107818" stroke-width="4.2"/><path d="M80.5 279.5 L88.5 287.5" stroke="#20D028" stroke-width="2.6"/><path d="M79 278 L81 280" stroke="#F0F020" stroke-width="3.2"/><circle cx="89" cy="288" r="1.5" fill="#E8E020"/><rect x="107.6" y="271" width="12.100000000000009" height="7.300000000000011" fill="#C4C6F2" stroke="#A4A6DC" stroke-width=".8"/><line x1="108.6" y1="274.65" x2="118.7" y2="274.65" stroke="#E4E4FA" stroke-width=".8"/><rect x="107.6" y="282.6" width="12.100000000000009" height="7.0" fill="#C4C6F2" stroke="#A4A6DC" stroke-width=".8"/><line x1="108.6" y1="286.1" x2="118.7" y2="286.1" stroke="#E4E4FA" stroke-width=".8"/><rect x="103.8" y="278.6" width="11.900000000000006" height="3.3999999999999773" fill="#fff" stroke="#3A5CA8" stroke-width="1.3"/><path d="M100.3 270.8 L107.5 277.8 M107.5 270.8 L100.3 277.8" stroke="#F04A18" stroke-width="1.9"/><rect x="128.5" y="272.3" width="14.5" height="14.5" fill="#A8A898"/><rect x="131" y="273.5" width="9" height="4.5" fill="#C8C8A8"/><rect x="131" y="282" width="6" height="4" fill="#888878"/><rect x="137.8" y="280.8" width="10.2" height="8.2" fill="#B4B4CC"/><text x="138.5" y="287.8" font-family="Liberation Sans" font-weight="bold" font-size="7" fill="#8888B0">OK</text><path d="M166.5 271 L172.2 277.5 H169.5 V288.3 H163.5 V277.5 H160.9Z" fill="#A2A2C0"/><path d="M195.3 288.8 L201 282.3 H198.3 V271 H192.3 V282.3 H189.7Z" fill="#2626A8"/><rect x="219.3" y="271" width="8.0" height="4.5" fill="#C4C6F2" stroke="#A4A6DC" stroke-width=".8"/><line x1="220.3" y1="273.25" x2="226.3" y2="273.25" stroke="#E4E4FA" stroke-width=".8"/><rect x="219.3" y="275.5" width="8.0" height="3.5" fill="#C4C6F2" stroke="#A4A6DC" stroke-width=".8"/><line x1="220.3" y1="277.25" x2="226.3" y2="277.25" stroke="#E4E4FA" stroke-width=".8"/><rect x="215.5" y="279" width="10.099999999999994" height="3.1999999999999886" fill="#fff" stroke="#3A5CA8" stroke-width="1.3"/><rect x="219.3" y="282.5" width="8.0" height="3.5" fill="#C4C6F2" stroke="#A4A6DC" stroke-width=".8"/><line x1="220.3" y1="284.25" x2="226.3" y2="284.25" stroke="#E4E4FA" stroke-width=".8"/><rect x="219.3" y="286" width="8.0" height="3.5" fill="#C4C6F2" stroke="#A4A6DC" stroke-width=".8"/><line x1="220.3" y1="287.75" x2="226.3" y2="287.75" stroke="#E4E4FA" stroke-width=".8"/><path d="M218+0 271" /><line x1="218" y1="270.5" x2="218" y2="286" stroke="#2A2AA8" stroke-width="1.4"/><path d="M214.8 284.5 H221.2 L218 289.5Z" fill="#2A2AA8"/><text x="229.5" y="278.6" font-family="Liberation Sans" font-weight="bold" font-size="9.6" fill="#2A2AA0" transform="translate(229.5 0) scale(.78 1) translate(-229.5 0)">A</text><text x="229.5" y="289" font-family="Liberation Sans" font-weight="bold" font-size="9.6" fill="#E01818" transform="translate(229.5 0) scale(.78 1) translate(-229.5 0)">Z</text><rect x="247.9" y="271" width="8.0" height="4.5" fill="#C4C6F2" stroke="#A4A6DC" stroke-width=".8"/><line x1="248.9" y1="273.25" x2="254.9" y2="273.25" stroke="#E4E4FA" stroke-width=".8"/><rect x="247.9" y="275.5" width="8.0" height="3.5" fill="#C4C6F2" stroke="#A4A6DC" stroke-width=".8"/><line x1="248.9" y1="277.25" x2="254.9" y2="277.25" stroke="#E4E4FA" stroke-width=".8"/><rect x="244.1" y="279" width="10.099999999999994" height="3.1999999999999886" fill="#fff" stroke="#3A5CA8" stroke-width="1.3"/><rect x="247.9" y="282.5" width="8.0" height="3.5" fill="#C4C6F2" stroke="#A4A6DC" stroke-width=".8"/><line x1="248.9" y1="284.25" x2="254.9" y2="284.25" stroke="#E4E4FA" stroke-width=".8"/><rect x="247.9" y="286" width="8.0" height="3.5" fill="#C4C6F2" stroke="#A4A6DC" stroke-width=".8"/><line x1="248.9" y1="287.75" x2="254.9" y2="287.75" stroke="#E4E4FA" stroke-width=".8"/><path d="M218+28.6 271" /><line x1="246.6" y1="270.5" x2="246.6" y2="286" stroke="#2A2AA8" stroke-width="1.4"/><path d="M243.4 284.5 H249.79999999999998 L246.6 289.5Z" fill="#2A2AA8"/><text x="258.1" y="278.6" font-family="Liberation Sans" font-weight="bold" font-size="9.6" fill="#E01818" transform="translate(258.1 0) scale(.78 1) translate(-258.1 0)">Z</text><text x="258.1" y="289" font-family="Liberation Sans" font-weight="bold" font-size="9.6" fill="#2A2AA0" transform="translate(258.1 0) scale(.78 1) translate(-258.1 0)">A</text></svg><div style="position:absolute;left:9px;top:295px;width:1800px;height:600px;background:#FEFCEA"></div><div style="position:absolute;left:9px;top:295px;width:1800px;height:38px;background:#ECE7DE"></div><div style="position:absolute;left:44px;top:295px;width:100px;height:38px;background:#CCC6BB"></div><div style="position:absolute;left:9px;top:333px;width:35px;height:600px;background:#fff"></div><div style="position:absolute;left:1683px;top:333px;width:120px;height:600px;background:#fff"></div><div style="position:absolute;left:865px;top:439.2px;width:99px;height:21.19999999999999px;background:#fff"></div><div style="position:absolute;left:865px;top:481.6px;width:99px;height:21.19999999999999px;background:#fff"></div><div style="position:absolute;left:865px;top:524.2px;width:99px;height:21.399999999999977px;background:#fff"></div><svg style="position:absolute;left:0;top:0" width="1793" height="558"><g stroke="#A8A396" stroke-width="1.5"><line x1="9.3" y1="295.6" x2="1800" y2="295.6"/><line x1="9.3" y1="332.8" x2="1800" y2="332.8"/><line x1="9.3" y1="354" x2="1800" y2="354"/><line x1="9.3" y1="375.4" x2="1800" y2="375.4"/><line x1="9.3" y1="396.4" x2="1800" y2="396.4"/><line x1="9.3" y1="418" x2="1800" y2="418"/><line x1="9.3" y1="460.4" x2="1800" y2="460.4"/><line x1="9.3" y1="502.8" x2="1800" y2="502.8"/><line x1="9.3" y1="545.6" x2="1800" y2="545.6"/><line x1="9.3" y1="294.90000000000003" x2="9.3" y2="560"/><line x1="43.8" y1="294.90000000000003" x2="43.8" y2="560"/><line x1="144" y1="294.90000000000003" x2="144" y2="560"/><line x1="864.2" y1="294.90000000000003" x2="864.2" y2="560"/><line x1="963.9" y1="294.90000000000003" x2="963.9" y2="560"/><line x1="1682.6" y1="294.90000000000003" x2="1682.6" y2="560"/><line x1="1782.6" y1="294.90000000000003" x2="1782.6" y2="560"/><line x1="864.2" y1="314.5" x2="963.9" y2="314.5"/></g></svg><div style="position:absolute;left:45px;top:334px;width:98px;height:19px;background:#000080;outline:1px dotted #E8E060;outline-offset:-1px"></div><div class="t" style="left:10.8px;top:296.38px;font-size:15.5px;font-weight:normal;color:#000;letter-spacing:-0.2px;transform:scaleX(0.85);transform-origin:left top;">N</div><svg style="position:absolute;left:19px;top:299px" width="7" height="8" viewBox="0 0 7 8"><ellipse cx="2.6" cy="2.6" rx="2" ry="1.9" fill="none" stroke="#222" stroke-width="1.1"/><rect x="0.4" y="5.6" width="4.6" height="1.3" fill="#222"/></svg><div class="t" style="left:46px;top:296.38px;font-size:15.5px;font-weight:normal;color:#000;letter-spacing:-0.2px;transform:scaleX(0.9);transform-origin:left top;">Счет Дт</div><div class="t" style="left:146px;top:296.38px;font-size:15.5px;font-weight:normal;color:#000;letter-spacing:-0.2px;transform:scaleX(0.9);transform-origin:left top;">Субконто</div><div class="t" style="left:866px;top:296.38px;font-size:15.5px;font-weight:normal;color:#000;letter-spacing:-0.2px;transform:scaleX(0.9);transform-origin:left top;">Счет Кт</div><div class="t" style="left:866px;top:314.88px;font-size:15.5px;font-weight:normal;color:#000;letter-spacing:-0.2px;transform:scaleX(0.9);transform-origin:left top;">Вид расчета</div><div class="t" style="left:966px;top:296.38px;font-size:15.5px;font-weight:normal;color:#000;letter-spacing:-0.2px;transform:scaleX(0.9);transform-origin:left top;">Субконто</div><div class="t" style="left:1684px;top:296.38px;font-size:15.5px;font-weight:normal;color:#000;letter-spacing:-0.2px;transform:scaleX(0.9);transform-origin:left top;">Сумма</div><div class="t" style="left:1784px;top:296.38px;font-size:15.5px;font-weight:normal;color:#000;letter-spacing:-0.2px;transform:scaleX(0.9);transform-origin:left top;">Р</div><div class="t" style="right:1751.5px;top:335.68px;font-size:15.5px;font-weight:normal;color:#000;letter-spacing:-0.2px;transform:scaleX(0.9);transform-origin:right top;">1</div><div class="t" style="left:47px;top:335.68px;font-size:15.5px;font-weight:normal;color:#fff;letter-spacing:-0.2px;transform:scaleX(0.9);transform-origin:left top;">44.01</div><div class="t" style="left:147px;top:335.68px;font-size:15.5px;font-weight:normal;color:#000;letter-spacing:-0.2px;transform:scaleX(0.9);transform-origin:left top;">Списание НДС на расходы (не ЕНВД)</div><div class="t" style="left:867px;top:335.68px;font-size:15.5px;font-weight:normal;color:#000;letter-spacing:-0.2px;transform:scaleX(0.9);transform-origin:left top;">69.01</div><div class="t" style="left:967px;top:335.68px;font-size:15.5px;font-weight:normal;color:#000;letter-spacing:-0.2px;transform:scaleX(0.9);transform-origin:left top;">Налог (взносы): начислено / уплачено</div><div class="t" style="right:12px;top:335.68px;font-size:15.5px;font-weight:normal;color:#000;letter-spacing:-0.2px;transform:scaleX(0.9);transform-origin:right top;">8 343,09</div><div class="t" style="right:1751.5px;top:356.88px;font-size:15.5px;font-weight:normal;color:#000;letter-spacing:-0.2px;transform:scaleX(0.9);transform-origin:right top;">2</div><div class="t" style="left:47px;top:356.88px;font-size:15.5px;font-weight:normal;color:#000;letter-spacing:-0.2px;transform:scaleX(0.9);transform-origin:left top;">44.01</div><div class="t" style="left:147px;top:356.88px;font-size:15.5px;font-weight:normal;color:#000;letter-spacing:-0.2px;transform:scaleX(0.9);transform-origin:left top;">Списание НДС на расходы (не ЕНВД)</div><div class="t" style="left:867px;top:356.88px;font-size:15.5px;font-weight:normal;color:#000;letter-spacing:-0.2px;transform:scaleX(0.9);transform-origin:left top;">69.03.1</div><div class="t" style="left:967px;top:356.88px;font-size:15.5px;font-weight:normal;color:#000;letter-spacing:-0.2px;transform:scaleX(0.9);transform-origin:left top;">Налог (взносы): начислено / уплачено</div><div class="t" style="right:12px;top:356.88px;font-size:15.5px;font-weight:normal;color:#000;letter-spacing:-0.2px;transform:scaleX(0.9);transform-origin:right top;">14 672,32</div><div class="t" style="right:1751.5px;top:378.28px;font-size:15.5px;font-weight:normal;color:#000;letter-spacing:-0.2px;transform:scaleX(0.9);transform-origin:right top;">3</div><div class="t" style="left:47px;top:378.28px;font-size:15.5px;font-weight:normal;color:#000;letter-spacing:-0.2px;transform:scaleX(0.9);transform-origin:left top;">44.01</div><div class="t" style="left:147px;top:378.28px;font-size:15.5px;font-weight:normal;color:#000;letter-spacing:-0.2px;transform:scaleX(0.9);transform-origin:left top;">Списание НДС на расходы (не ЕНВД)</div><div class="t" style="left:867px;top:378.28px;font-size:15.5px;font-weight:normal;color:#000;letter-spacing:-0.2px;transform:scaleX(0.9);transform-origin:left top;">69.02.7</div><div class="t" style="right:12px;top:378.28px;font-size:15.5px;font-weight:normal;color:#000;letter-spacing:-0.2px;transform:scaleX(0.9);transform-origin:right top;">63 292,38</div><div class="t" style="right:1751.5px;top:399.28px;font-size:15.5px;font-weight:normal;color:#000;letter-spacing:-0.2px;transform:scaleX(0.9);transform-origin:right top;">4</div><div class="t" style="left:47px;top:399.28px;font-size:15.5px;font-weight:normal;color:#000;letter-spacing:-0.2px;transform:scaleX(0.9);transform-origin:left top;">44.01</div><div class="t" style="left:147px;top:399.28px;font-size:15.5px;font-weight:normal;color:#000;letter-spacing:-0.2px;transform:scaleX(0.9);transform-origin:left top;">Списание НДС на расходы (не ЕНВД)</div><div class="t" style="left:867px;top:399.28px;font-size:15.5px;font-weight:normal;color:#000;letter-spacing:-0.2px;transform:scaleX(0.9);transform-origin:left top;">69.11</div><div class="t" style="left:967px;top:399.28px;font-size:15.5px;font-weight:normal;color:#000;letter-spacing:-0.2px;transform:scaleX(0.9);transform-origin:left top;">Налог (взносы): начислено / уплачено</div><div class="t" style="right:12px;top:399.28px;font-size:15.5px;font-weight:normal;color:#000;letter-spacing:-0.2px;transform:scaleX(0.9);transform-origin:right top;">575,39</div><div class="t" style="right:1751.5px;top:420.88px;font-size:15.5px;font-weight:normal;color:#000;letter-spacing:-0.2px;transform:scaleX(0.9);transform-origin:right top;">5</div><div class="t" style="left:47px;top:420.88px;font-size:15.5px;font-weight:normal;color:#000;letter-spacing:-0.2px;transform:scaleX(0.9);transform-origin:left top;">44.01</div><div class="t" style="left:147px;top:420.88px;font-size:15.5px;font-weight:normal;color:#000;letter-spacing:-0.2px;transform:scaleX(0.9);transform-origin:left top;">Списание НДС на расходы (не ЕНВД)</div><div class="t" style="left:867px;top:420.88px;font-size:15.5px;font-weight:normal;color:#000;letter-spacing:-0.2px;transform:scaleX(0.9);transform-origin:left top;">70</div><div class="t" style="left:967px;top:420.88px;font-size:15.5px;font-weight:normal;color:#000;letter-spacing:-0.2px;transform:scaleX(0.9);transform-origin:left top;">Авдеева Маргарита Евгеньевна</div><div class="t" style="right:12px;top:420.88px;font-size:15.5px;font-weight:normal;color:#000;letter-spacing:-0.2px;transform:scaleX(0.9);transform-origin:right top;">17 181,82</div><div class="t" style="right:1751.5px;top:463.28px;font-size:15.5px;font-weight:normal;color:#000;letter-spacing:-0.2px;transform:scaleX(0.9);transform-origin:right top;">6</div><div class="t" style="left:47px;top:463.28px;font-size:15.5px;font-weight:normal;color:#000;letter-spacing:-0.2px;transform:scaleX(0.9);transform-origin:left top;">44.01</div><div class="t" style="left:147px;top:463.28px;font-size:15.5px;font-weight:normal;color:#000;letter-spacing:-0.2px;transform:scaleX(0.9);transform-origin:left top;">Списание НДС на расходы (не ЕНВД)</div><div class="t" style="left:867px;top:463.28px;font-size:15.5px;font-weight:normal;color:#000;letter-spacing:-0.2px;transform:scaleX(0.9);transform-origin:left top;">70</div><div class="t" style="left:967px;top:463.28px;font-size:15.5px;font-weight:normal;color:#000;letter-spacing:-0.2px;transform:scaleX(0.9);transform-origin:left top;">Басова Евгения Викторовна</div><div class="t" style="right:12px;top:463.28px;font-size:15.5px;font-weight:normal;color:#000;letter-spacing:-0.2px;transform:scaleX(0.9);transform-origin:right top;">17 723,94</div><div class="t" style="right:1751.5px;top:505.68px;font-size:15.5px;font-weight:normal;color:#000;letter-spacing:-0.2px;transform:scaleX(0.9);transform-origin:right top;">7</div><div class="t" style="left:47px;top:505.68px;font-size:15.5px;font-weight:normal;color:#000;letter-spacing:-0.2px;transform:scaleX(0.9);transform-origin:left top;">44.01</div><div class="t" style="left:147px;top:505.68px;font-size:15.5px;font-weight:normal;color:#000;letter-spacing:-0.2px;transform:scaleX(0.9);transform-origin:left top;">Списание НДС на расходы (не ЕНВД)</div><div class="t" style="left:867px;top:505.68px;font-size:15.5px;font-weight:normal;color:#000;letter-spacing:-0.2px;transform:scaleX(0.9);transform-origin:left top;">70</div><div class="t" style="left:967px;top:505.68px;font-size:15.5px;font-weight:normal;color:#000;letter-spacing:-0.2px;transform:scaleX(0.9);transform-origin:left top;">Белан Ольга Владимировна</div><div class="t" style="right:12px;top:505.68px;font-size:15.5px;font-weight:normal;color:#000;letter-spacing:-0.2px;transform:scaleX(0.9);transform-origin:right top;">18 000,00</div><div class="t" style="right:1751.5px;top:548.48px;font-size:15.5px;font-weight:normal;color:#000;letter-spacing:-0.2px;transform:scaleX(0.9);transform-origin:right top;">8</div><div class="t" style="left:47px;top:548.48px;font-size:15.5px;font-weight:normal;color:#000;letter-spacing:-0.2px;transform:scaleX(0.9);transform-origin:left top;">44.01</div><div class="t" style="left:147px;top:548.48px;font-size:15.5px;font-weight:normal;color:#000;letter-spacing:-0.2px;transform:scaleX(0.9);transform-origin:left top;">Списание НДС на расходы (не ЕНВД)</div><div class="t" style="left:867px;top:548.48px;font-size:15.5px;font-weight:normal;color:#000;letter-spacing:-0.2px;transform:scaleX(0.9);transform-origin:left top;">70</div><div class="t" style="left:967px;top:548.48px;font-size:15.5px;font-weight:normal;color:#000;letter-spacing:-0.2px;transform:scaleX(0.9);transform-origin:left top;">Бирюков Андрей Юрьевич</div><div class="t" style="right:12px;top:548.48px;font-size:15.5px;font-weight:normal;color:#000;letter-spacing:-0.2px;transform:scaleX(0.9);transform-origin:right top;">20 000,00</div>
</body></html>
